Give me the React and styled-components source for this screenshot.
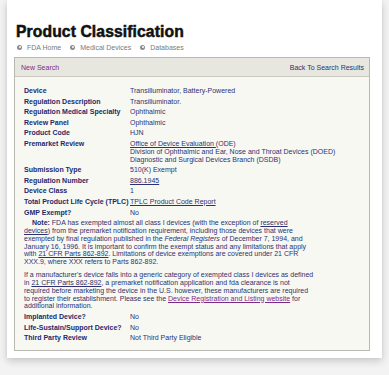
import React from "react";
import styled, { createGlobalStyle } from "styled-components";

const Global = createGlobalStyle`
  html, body { margin: 0; padding: 0; background: #f3f3f3; }
  body { font-family: "Liberation Sans", Arial, sans-serif; }
`;

const Page = styled.div`
  padding: 0 7px 17px 7px;
`;

const Card = styled.div`
  background: #ffffff;
  box-shadow: 0 3px 8px rgba(0, 0, 0, 0.18), 0 0 3px rgba(0, 0, 0, 0.06);
  padding: 22px 12px 7px 7px;
`;

const Title = styled.h1`
  margin: 0 0 0 2px;
  font-family: "Liberation Sans", Arial, sans-serif;
  font-size: 15.7px;
  line-height: 20px;
  font-weight: 700;
  color: #111;
  -webkit-text-stroke: 0.5px #111;
  letter-spacing: 0.1px;
`;

const Crumbs = styled.div`
  display: flex;
  align-items: center;
  gap: 9px;
  height: 10px;
  margin-left: 3px;
  font-size: 7px;
  color: #7a7a7a;
`;

const Crumb = styled.span`
  display: flex;
  align-items: center;
  gap: 5px;
`;

const Bullet = styled.span`
  width: 5px;
  height: 5px;
  border-radius: 50%;
  background: #8c8c8c;
  display: flex;
  align-items: center;
  justify-content: center;
  &::after {
    content: "";
    width: 2px;
    height: 2px;
    border-radius: 50%;
    background: #fff;
  }
`;

const Box = styled.div`
  margin-top: 5px;
  border: 1px solid #b9b9b2;
  border-top-width: 1px;
  background: #f8f8f3;
`;

const Bar = styled.div`
  display: flex;
  justify-content: space-between;
  align-items: center;
  height: 18px;
  padding: 0 5px 0 6px;
  background: #e7e7e0;
  border-bottom: 1px solid #c9c9c1;
  font-size: 7px;
`;

const BarLink = styled.span`
  color: ${(p) => (p.$visited ? "#7b2a86" : "#2c3275")};
`;

const Content = styled.div`
  padding: 10px 10px 8px 9px;
  display: grid;
  grid-template-columns: 106px 1fr;
  row-gap: 2.8px;
  font-size: 7px;
  line-height: 7.8px;
  color: #2d3270;
`;

const Label = styled.div`
  font-weight: 700;
  color: #232a6a;
`;

const Value = styled.div`
  color: #2d3270;
`;

const A = styled.span`
  text-decoration: underline;
  color: ${(p) => (p.$visited ? "#7b2a86" : "#2d3270")};
`;

const Para = styled.div`
  grid-column: 1 / -1;
  white-space: nowrap;
  margin: ${(p) => p.$m || "0"};
  text-indent: ${(p) => p.$indent || "0"};
`;

const rows1 = [
  ["Device", "Transilluminator, Battery-Powered"],
  ["Regulation Description", "Transilluminator."],
  ["Regulation Medical Specialty", "Ophthalmic"],
  ["Review Panel", "Ophthalmic"],
  ["Product Code", "HJN"],
];

export default function App() {
  return (
    <>
      <Global />
      <Page>
        <Card>
          <Title>Product Classification</Title>
          <Crumbs>
            <Crumb><Bullet />FDA Home</Crumb>
            <Crumb><Bullet />Medical Devices</Crumb>
            <Crumb><Bullet />Databases</Crumb>
          </Crumbs>
          <Box>
            <Bar>
              <BarLink $visited>New Search</BarLink>
              <BarLink>Back To Search Results</BarLink>
            </Bar>
            <Content>
              {rows1.map(([l, v]) => (
                <React.Fragment key={l}>
                  <Label>{l}</Label>
                  <Value>{v}</Value>
                </React.Fragment>
              ))}
              <Label>Premarket Review</Label>
              <Value>
                <A>Office of Device Evaluation </A>(ODE)<br />
                Division of Ophthalmic and Ear, Nose and Throat Devices (DOED)<br />
                Diagnostic and Surgical Devices Branch (DSDB)
              </Value>
              <Label>Submission Type</Label>
              <Value>510(K) Exempt</Value>
              <Label>Regulation Number</Label>
              <Value><A>886.1945</A></Value>
              <Label>Device Class</Label>
              <Value>1</Value>
              <Label>Total Product Life Cycle (TPLC)</Label>
              <Value><A>TPLC Product Code Report</A></Value>
              <Label>GMP Exempt?</Label>
              <Value>No</Value>
              <Para $indent="8px">
                <Label as="b">Note:</Label> FDA has exempted almost all class I devices (with the exception of <A>reserved</A><br />
                <A>devices</A>) from the premarket notification requirement, including those devices that were<br />
                exempted by final regulation published in the <i>Federal Registers</i> of December 7, 1994, and<br />
                January 16, 1996. It is important to confirm the exempt status and any limitations that apply<br />
                with <A>21 CFR Parts 862-892</A>. Limitations of device exemptions are covered under 21 CFR<br />
                XXX.9, where XXX refers to Parts 862-892.
              </Para>
              <Para $m="2.5px 0 0 0">
                If a manufacturer's device falls into a generic category of exempted class I devices as defined<br />
                in <A>21 CFR Parts 862-892</A>, a premarket notification application and fda clearance is not<br />
                required before marketing the device in the U.S. however, these manufacturers are required<br />
                to register their establishment. Please see the <A $visited>Device Registration and Listing website</A> for<br />
                additional information.
              </Para>
              <Label>Implanted Device?</Label>
              <Value>No</Value>
              <Label>Life-Sustain/Support Device?</Label>
              <Value>No</Value>
              <Label>Third Party Review</Label>
              <Value>Not Third Party Eligible</Value>
            </Content>
          </Box>
        </Card>
      </Page>
    </>
  );
}
